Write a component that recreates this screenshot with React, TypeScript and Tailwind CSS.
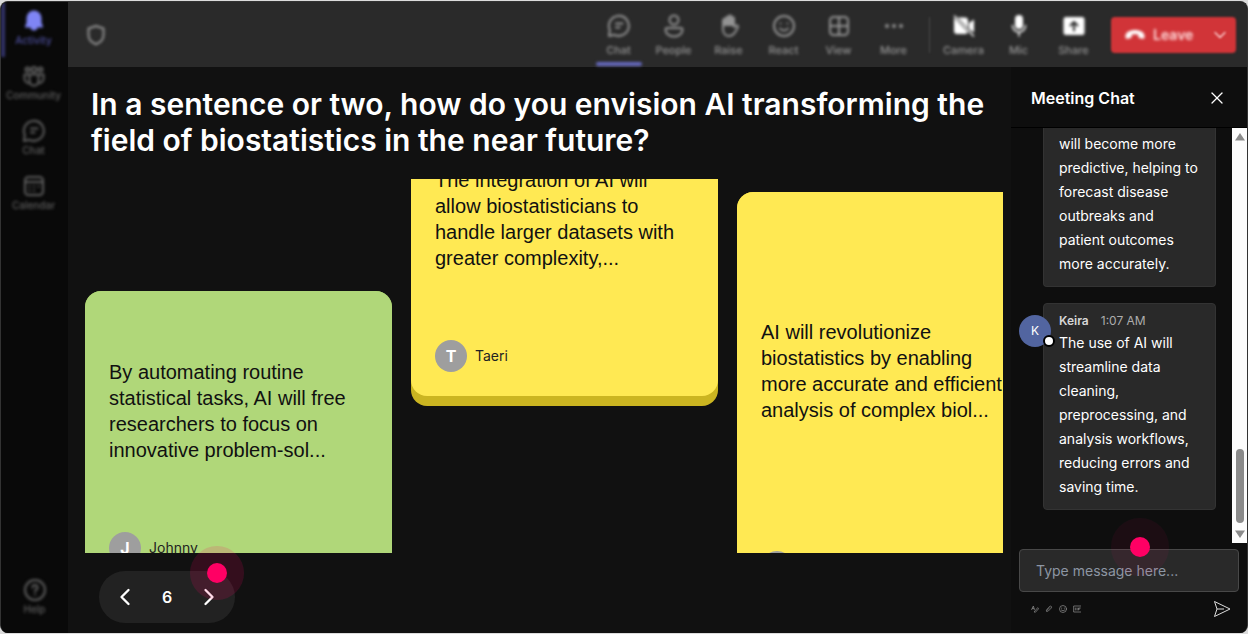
import type { ReactNode } from 'react';
import { clsx } from 'clsx';
import { ChevronDown, ChevronLeft, ChevronRight, X } from 'lucide-react';

interface IconProps {
  children: ReactNode;
  className?: string;
}

const Icon = ({ children, className = 'size-6' }: IconProps) => (
  <svg
    viewBox="0 0 24 24"
    fill="none"
    stroke="currentColor"
    strokeWidth="2"
    strokeLinecap="round"
    strokeLinejoin="round"
    className={className}
    aria-hidden="true"
  >
    {children}
  </svg>
);

const ChatShape = () => (
  <>
    <path d="M2 22l.8-6A10 10 0 1 1 7.500 20.800z" />
    <path d="M9 9.500h6.500M9 13.500h3.500" />
  </>
);

const sideItems = [
  {
    label: 'Activity',
    active: true,
    icon: (
      <path
        d="M12 1.500a7.500 7.500 0 0 0-7.500 7.500v4.800L3 17.400c-.2.600.1 1.100.8 1.100h4.500a3.800 3.800 0 0 0 7.400 0h4.500c.7 0 1-.5.800-1.100l-1.500-3.600V9A7.500 7.500 0 0 0 12 1.500z"
        fill="currentColor"
        stroke="none"
      />
    ),
  },
  {
    label: 'Community',
    icon: (
      <>
        <circle cx="5.500" cy="5.500" r="2" />
        <circle cx="12" cy="5.500" r="2.500" />
        <circle cx="18.500" cy="5.500" r="2" />
        <path d="M7.500 10.500h9v6.500a4.500 4.500 0 0 1-9 0zM7.500 10.500h-5v4.500a4.500 4.500 0 0 0 5.500 4M16.500 10.500h5v4.500a4.500 4.500 0 0 1-5.500 4" />
      </>
    ),
  },
  { label: 'Chat', icon: <ChatShape /> },
  {
    label: 'Calendar',
    icon: (
      <>
        <rect x="3" y="3" width="18" height="18" rx="3.500" />
        <path d="M3 8h18M7.500 12.500h.1M12 12.500h.1M16.500 12.500h.1M7.500 16.500h.1M12 16.500h.1" />
      </>
    ),
  },
];

const meetingItems = [
  { label: 'Chat', active: true, icon: <ChatShape /> },
  {
    label: 'People',
    icon: (
      <>
        <circle cx="12" cy="6" r="4.500" />
        <path d="M5 14h14a1.500 1.500 0 0 1 1.500 1.500c0 4-3.500 7-8.500 7s-8.500-3-8.500-7A1.500 1.500 0 0 1 5 14z" />
      </>
    ),
  },
  {
    label: 'Raise',
    icon: (
      <>
        <path
          d="M6 11V6.500a1.400 1.400 0 0 1 2.800 0V4.300a1.400 1.400 0 0 1 2.800 0V3a1.400 1.400 0 0 1 2.800 0v1a1.400 1.400 0 0 1 2.600.4V11z"
          fill="currentColor"
        />
        <path d="M6 11v4c0 4 2.500 7 6.200 7 5.500 0 7.100-5.600 8.700-9 .5-1.100-.9-2.100-1.900-1.400L17 13v-2" />
      </>
    ),
  },
  {
    label: 'React',
    icon: (
      <>
        <circle cx="12" cy="12" r="10" />
        <path d="M8.500 9.500h.1M15.400 9.500h.1M8 14.500c2 2.500 6 2.500 8 0" />
      </>
    ),
  },
  {
    label: 'View',
    icon: (
      <>
        <rect x="3" y="3" width="18" height="18" rx="3.500" />
        <path d="M12 3v18M3 12h18" />
      </>
    ),
  },
  {
    label: 'More',
    icon: (
      <>
        <circle cx="5" cy="12" r="1" fill="currentColor" />
        <circle cx="12" cy="12" r="1" fill="currentColor" />
        <circle cx="19" cy="12" r="1" fill="currentColor" />
      </>
    ),
  },
];

const deviceItems = [
  {
    label: 'Camera',
    icon: (
      <>
        <path d="M4 3.500h9a3 3 0 0 1 3 3V17a3 3 0 0 1-3 3H5a3 3 0 0 1-3-3V4zM17 9l5-3.500v13L17 15z" fill="currentColor" stroke="none" />
        <path d="M2.500 2l19 20" stroke="#2a2a2a" strokeWidth="3" />
        <path d="M2.500 2l19 20" strokeWidth="1.500" />
      </>
    ),
  },
  {
    label: 'Mic',
    icon: (
      <>
        <rect x="8" y="1" width="8" height="14" rx="4" fill="currentColor" stroke="none" />
        <path d="M5.500 11.500a6.500 6.500 0 0 0 13 0M12 18v4" strokeWidth="1.500" />
      </>
    ),
  },
  {
    label: 'Share',
    icon: (
      <>
        <rect x="1.500" y="3" width="21" height="18" rx="2.500" fill="currentColor" stroke="none" />
        <path d="M12 16.500V8.500M8.500 11.500L12 8l3.500 3.500" stroke="#2a2a2a" />
      </>
    ),
  },
];

const cards = [
  {
    name: 'Johnny',
    text: 'By automating routine statistical tasks, AI will free researchers to focus on innovative problem-sol...',
    place: 'mt-28 h-[307px]',
    color: 'bg-[#b0d779]',
    depth: 'bg-[#86ad4f]',
  },
  {
    name: 'Taeri',
    text: 'The integration of AI will allow biostatisticians to handle larger datasets with greater complexity,...',
    place: '-mt-20 h-[307px]',
    color: 'bg-[#ffe953]',
    depth: 'bg-[#cbb521]',
  },
  {
    name: '',
    text: 'AI will revolutionize biostatistics by enabling more accurate and efficient analysis of complex biol...',
    place: 'mt-[13px] h-[425px]',
    color: 'bg-[#ffe953]',
    depth: 'bg-[#cbb521]',
  },
];

const Hotspot = ({ className }: { className: string }) => (
  <span
    className={clsx(
      'pointer-events-none absolute z-10 flex items-center justify-center rounded-full',
      className,
    )}
  >
    <span className="size-5 rounded-full bg-[#ff0064]" />
  </span>
);

const Sidebar = () => (
  <nav className="flex w-[67px] shrink-0 flex-col bg-[#090909] text-[10px] leading-3 font-medium text-[#5e5e5e]">
    <div className="flex flex-col blur-[0.1rem]">
      {sideItems.map((item) => (
        <button
          key={item.label}
          className={clsx(
            'flex h-[55px] flex-col items-center gap-px border-l-4 pt-[7px] pr-1.5',
            item.active ? 'border-[#33346b] text-[#7f85f5]' : 'border-transparent',
          )}
        >
          <Icon>{item.icon}</Icon>
          <span className={clsx(item.active && 'text-[#4c4e9c]')}>{item.label}</span>
        </button>
      ))}
    </div>
    <button className="mt-auto mb-[18px] flex flex-col items-center gap-px blur-[0.1rem]">
      <Icon>
        <circle cx="12" cy="12" r="10" />
        <path d="M9.500 9.500a2.500 2.500 0 1 1 3.700 2.200c-.8.500-1.200 1-1.200 1.800M12 16.500h.1" />
      </Icon>
      Help
    </button>
  </nav>
);

const TopBar = () => (
  <header className="flex h-[65px] shrink-0 items-center bg-[#2a2a2a] pr-[11px] pl-4 text-[11px] leading-3 font-medium text-[#939393]">
    <Icon className="size-6 blur-[0.1rem]">
      <path d="M12 3l7.500 2.500V12c0 4.500-3 7.500-7.500 9.200C7.500 19.500 4.500 16.500 4.500 12V5.500z" />
    </Icon>
    <div className="ml-auto flex h-full blur-[0.1rem]">
      {meetingItems.map((item) => (
        <button
          key={item.label}
          className="flex w-[55px] flex-col items-center gap-1.5 pt-3"
        >
          <Icon>{item.icon}</Icon>
          {item.label}
          {item.active && <span className="mt-auto mb-px h-1 w-[46px] rounded-sm bg-[#6669c0]" />}
        </button>
      ))}
    </div>
    <span className="mr-1.5 ml-2 h-9 w-px bg-[#4a4a4a] blur-[1px]" />
    <div className="flex h-full blur-[0.1rem]">
      {deviceItems.map((item) => (
        <button
          key={item.label}
          className="flex w-[55px] flex-col items-center gap-1.5 pt-3"
        >
          <Icon className="size-6 text-white">{item.icon}</Icon>
          {item.label}
        </button>
      ))}
    </div>
    <div className="relative ml-2.5 flex h-9 w-[125px] items-center pl-3 text-sm font-semibold text-[#ffdcdc]">
      <span className="absolute inset-0 rounded-sm bg-[#d13438] blur-[1px]" />
      <button className="relative flex items-center gap-1.5 blur-[0.1rem]">
        <svg viewBox="0 0 24 24" className="size-6 text-white" aria-hidden="true">
          <path
            d="M2.500 14.500c-.8-5 4-7.500 9.500-7.500s10.300 2.500 9.500 7.500c-.2 1-.9 1.500-1.900 1.300l-2.700-.5c-.9-.2-1.500-.8-1.600-1.700l-.2-2a11 11 0 0 0-6.200 0l-.2 2c-.1.900-.7 1.500-1.600 1.700l-2.700.5c-1 .2-1.700-.3-1.900-1.300z"
            fill="currentColor"
          />
        </svg>
        Leave
      </button>
      <button aria-label="Leave options" className="relative mr-1.5 ml-auto blur-[1px]">
        <ChevronDown className="size-5" strokeWidth={1.500} />
      </button>
    </div>
  </header>
);

const Board = () => (
  <main className="flex min-w-0 flex-1 flex-col pr-2 pl-[17px]">
    <h1 className="mt-[19px] pl-1.5 text-3xl font-semibold text-white">
      In a sentence or two, how do you envision AI transforming the field of
      biostatistics in the near future?
    </h1>
    <div className="mt-[21px] flex min-h-0 flex-1 gap-[19px] overflow-hidden">
      {cards.map((card) => (
        <div key={card.text} className="w-[307px] shrink-0">
          <div className={clsx('rounded-2xl pb-2.5', card.place, card.depth)}>
            <article className={clsx('flex h-full flex-col rounded-2xl px-6 pb-6', card.color)}>
              <div className="flex flex-1 items-center pb-0.5">
                <p className="font-['Liberation_Sans',sans-serif] text-xl/[26px] text-[#111]">
                  {card.text}
                </p>
              </div>
              <div className="flex items-center gap-2 text-sm text-[#222]">
                <span className="flex size-8 items-center justify-center rounded-full bg-[#9e9e9e] text-base font-bold text-white">
                  {card.name[0]}
                </span>
                {card.name}
              </div>
            </article>
          </div>
        </div>
      ))}
    </div>
    <div className="relative mt-[18px] mb-[10px] ml-[14px] flex h-[52px] w-34 shrink-0 items-center justify-between rounded-full bg-[#222] px-3 text-white">
      <button aria-label="Previous">
        <ChevronLeft className="size-7" strokeWidth={2} />
      </button>
      <span className="text-base font-semibold">6</span>
      <button aria-label="Next">
        <ChevronRight className="size-7" strokeWidth={2} />
      </button>
      <Hotspot className="-top-[25px] -right-[9px] size-[54px] bg-[#ff0064]/15" />
    </div>
  </main>
);

const ChatPanel = () => (
  <aside className="flex w-[236px] shrink-0 flex-col bg-[#0e0e0e] text-white">
    <div className="flex h-[61px] shrink-0 items-center justify-between border-b border-black px-5 pt-0.5">
      <h2 className="text-base font-semibold">Meeting Chat</h2>
      <button aria-label="Close chat">
        <X className="size-5" strokeWidth={1.500} />
      </button>
    </div>
    <div className="flex min-h-0 flex-1">
      <div className="flex flex-1 flex-col justify-end gap-4 overflow-hidden pr-4 pb-[33px] pl-8 text-sm/6">
        <div className="rounded-b-sm border border-t-0 border-[#333] bg-[#292929] px-[15px] pt-[5px] pb-2.5">
          <p>
            will become more predictive, helping to forecast disease outbreaks
            and patient outcomes more accurately.
          </p>
        </div>
        <div className="relative rounded-sm border border-[#333] bg-[#292929] px-[15px] pt-[7px] pb-2.5">
          <span className="absolute top-[11px] -left-[25px] flex size-8 items-center justify-center rounded-full bg-[#5265a0] text-xs">
            K
            <span className="absolute -right-1 bottom-0 size-3 rounded-full border-2 border-black bg-white" />
          </span>
          <p className="flex gap-3 text-xs/5 text-[#adadad]">
            <span className="font-semibold text-[#d6d6d6]">Keira</span>
            1:07 AM
          </p>
          <p>
            The use of AI will streamline data cleaning, preprocessing, and
            analysis workflows, reducing errors and saving time.
          </p>
        </div>
      </div>
      <div className="flex w-[15px] shrink-0 flex-col items-center bg-[#fcfcfc] py-[5px]" aria-hidden="true">
        <svg viewBox="0 0 10 8" className="h-2 w-2.5 fill-[#8b8b8b]">
          <path d="M5 0L10 7.500H0z" />
        </svg>
        <span className="mt-auto mb-[7px] h-[74px] w-2 rounded-full bg-[#8b8b8b]" />
        <svg viewBox="0 0 10 8" className="h-2 w-2.5 fill-[#8b8b8b]">
          <path d="M5 8L0 .5h10z" />
        </svg>
      </div>
    </div>
    <form className="shrink-0 px-2 pt-1.5 pb-[15px]">
      <div className="relative">
        <input
          aria-label="Message"
          placeholder="Type message here..."
          className="block h-[43px] w-full rounded-sm border border-[#484848] bg-[#292929] px-4 text-sm placeholder:text-[#8d96a3]"
        />
        <Hotspot className="-top-[31px] left-[92px] size-[58px] bg-[#ff0064]/6" />
      </div>
      <div className="mt-2 flex items-center gap-1.5 pl-3 text-[#999]">
        <Icon className="size-2">
          <path d="M2 14L7 3l3 11M4 10h5M10 20L20 8l3 3-9 10z" />
        </Icon>
        <Icon className="size-2">
          <path d="M5 20c-4-4 3-9 8-15 4-4 9 0 6 4l-9 9c-3 3-6-1-3-3l7-7" />
        </Icon>
        <Icon className="size-2">
          <circle cx="12" cy="12" r="10.500" />
          <path d="M8 9v1M16 9v1M7 15c3 3 7 3 10 0" />
        </Icon>
        <Icon className="size-2">
          <path d="M23 3H2v18h21M7 9v6M12 9v6M16 15V9h6M16 12h4" />
        </Icon>
        <button type="button" aria-label="Send" className="mr-2 ml-auto">
          <svg viewBox="0 0 18 18" className="size-[18px]" fill="none" stroke="#ddd" aria-hidden="true">
            <path d="M1.500 1.500L17 9 1.500 16.500 4 9zM4 9h7" />
          </svg>
        </button>
      </div>
    </form>
  </aside>
);

const App = () => (
  <div className="h-screen bg-[#dcdcdc] py-px font-['Inter',sans-serif]">
    <div className="flex h-full overflow-hidden rounded-lg border border-b-0 border-[#333] bg-[#111]">
      <Sidebar />
      <div className="flex min-w-0 flex-1 flex-col">
        <TopBar />
        <div className="flex min-h-0 flex-1">
          <Board />
          <ChatPanel />
        </div>
      </div>
    </div>
  </div>
);

export default App;
